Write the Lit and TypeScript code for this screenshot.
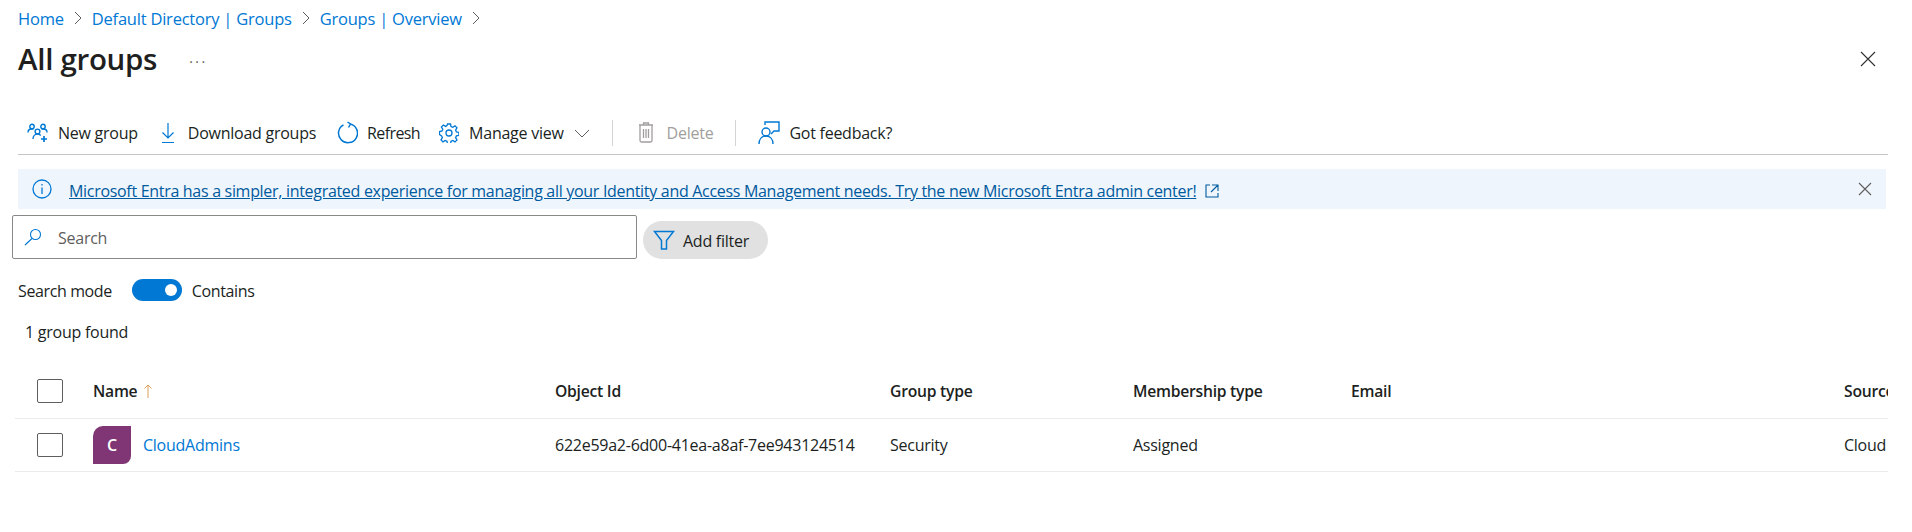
import { LitElement, html, css, svg } from "lit";
import { customElement } from "lit/decorators.js";

const chevron = svg`<path d="M5 2l6 6-6 6" fill="none" stroke="#605e5c" stroke-width="1"/>`;

@customElement("app-root")
export class AppRoot extends LitElement {
  static styles = css`
    :host {
      display: block;
      height: 532px;
      overflow: hidden;
      background: #fff;
      color: #201f1e;
      font-family: "Open Sans", "Noto Sans", sans-serif;
      font-size: 16px;
      letter-spacing: -0.25px;
    }
    svg {
      display: block;
      flex: none;
    }
    a {
      color: #0078d4;
      text-decoration: none;
    }
    .crumbs {
      display: flex;
      align-items: center;
      gap: 6px;
      height: 36px;
      padding-left: 18px;
      font-size: 16.5px;
      letter-spacing: -0.22px;
    }
    .title-row {
      display: flex;
      align-items: center;
      height: 46px;
      padding: 0 36px 0 18px;
    }
    h1 {
      margin: 0;
      font-size: 29.5px;
      line-height: 44px;
      font-weight: 600;
      letter-spacing: -0.3px;
    }
    .more {
      margin: 0 0 4px 32px;
      color: #605e5c;
      font-size: 14px;
      letter-spacing: 2.5px;
      flex: 1;
    }
    .toolbar {
      display: flex;
      align-items: center;
      height: 73px;
      margin: 0 24px 0 18px;
      padding: 29px 0 0 9px;
      border-bottom: 1px solid #c8c6c4;
      box-sizing: border-box;
      gap: 21px;
    }
    .tool {
      display: flex;
      align-items: center;
      gap: 9px;
      white-space: nowrap;
    }
    .tool.download {
      gap: 11px;
    }
    .tool.refresh {
      letter-spacing: -0.6px;
      margin-right: -2px;
    }
    .tool.manage {
      gap: 10px;
    }
    .tool.disabled {
      color: #a19f9d;
      gap: 13px;
      margin-left: 3px;
    }
    .sep {
      width: 1px;
      height: 26px;
      background: #d6d4d2;
      margin: 0 1px;
    }
    .banner {
      display: flex;
      align-items: center;
      height: 40px;
      margin: 14px 26px 0 18px;
      padding: 0 14px 0 14px;
      background: #eef5fd;
      gap: 17px;
    }
    .banner a {
      color: #005a9e;
      text-decoration: underline;
      letter-spacing: -0.305px;
    }
    .banner .msg {
      display: flex;
      align-items: center;
      gap: 9px;
      flex: 1;
      padding-top: 4px;
    }
    .filters {
      display: flex;
      align-items: flex-end;
      gap: 6px;
      margin: 6px 0 0 12px;
    }
    .search {
      display: flex;
      align-items: center;
      gap: 16px;
      width: 625px;
      height: 44px;
      padding-left: 11px;
      box-sizing: border-box;
      border: 1px solid #8a8886;
      border-radius: 2px;
      color: #605e5c;
    }
    .search span,
    .add span {
      padding-top: 2px;
    }
    .add {
      display: flex;
      align-items: center;
      gap: 8px;
      width: 125px;
      height: 38px;
      box-sizing: border-box;
      padding-left: 10px;
      background: #e1e1e1;
      border-radius: 19px;
    }
    .mode {
      display: flex;
      align-items: center;
      height: 22px;
      margin: 20px 0 0 18px;
      letter-spacing: -0.38px;
    }
    .mode span.label {
      padding-top: 2px;
    }
    .toggle {
      display: flex;
      justify-content: flex-end;
      align-items: center;
      width: 50px;
      height: 22px;
      margin: 0 10px 0 20px;
      padding-right: 5px;
      box-sizing: border-box;
      background: #0078d4;
      border-radius: 11px;
    }
    .knob {
      width: 12px;
      height: 12px;
      border-radius: 50%;
      background: #fff;
    }
    .count {
      margin: 21px 0 0 25px;
      line-height: 20px;
    }
    .table {
      margin: 17px 24px 0 15px;
      overflow: hidden;
    }
    .row {
      display: grid;
      grid-template-columns: 78px 462px 335px 243px 218px 493px 200px;
      align-items: center;
      white-space: nowrap;
      box-sizing: border-box;
      border-bottom: 1px solid #edebe9;
    }
    .row.head {
      height: 60px;
      font-weight: 600;
      font-size: 15.7px;
    }
    .row.head > span {
      padding-top: 4px;
    }
    .row.head > .box {
      margin-top: 4px;
      padding: 0;
    }
    .row.item {
      height: 53px;
    }
    .box {
      width: 26px;
      height: 24px;
      margin-left: 22px;
      box-sizing: border-box;
      border: 1px solid #605e5c;
      border-radius: 2px;
    }
    .name {
      display: flex;
      align-items: center;
      gap: 12px;
    }
    .avatar {
      display: flex;
      align-items: center;
      justify-content: center;
      width: 38px;
      height: 38px;
      background: #803674;
      color: #fff;
      font-size: 16px;
      font-weight: 600;
      border-radius: 10px 0 8px 0;
    }
  `;

  render() {
    return html`
      <nav class="crumbs">
        <a>Home</a>
        <svg width="16" height="16" viewBox="0 0 16 16">${chevron}</svg>
        <a>Default Directory | Groups</a>
        <svg width="16" height="16" viewBox="0 0 16 16">${chevron}</svg>
        <a>Groups | Overview</a>
        <svg width="16" height="16" viewBox="0 0 16 16">${chevron}</svg>
      </nav>
      <div class="title-row">
        <h1>All groups</h1>
        <span class="more">...</span>
        <svg width="16" height="16" viewBox="0 0 16 16"><path d="M1 1l14 14M15 1L1 15" stroke="#323130" stroke-width="1.1"/></svg>
      </div>
      <div class="toolbar">
        <span class="tool">
          <svg width="22" height="20" viewBox="0 0 22 20" fill="none" stroke="#0078d4" stroke-width="1.4">
            <circle cx="5" cy="3.500" r="2.200"/><circle cx="16" cy="3.500" r="2.200"/><circle cx="10.500" cy="8.500" r="2.400"/>
            <path d="M1 9.500c0-2 1.500-3.500 3.500-3.500h2M20 9.500c0-2-1.500-3.500-3.500-3.500h-2M6 16c0-3 2-5 4.500-5 1.500 0 2.500.5 3.200 1.500"/><path d="M17 13v6M14 16h6" stroke-width="1.700"/>
          </svg>New group
        </span>
        <span class="tool download">
          <svg width="18" height="22" viewBox="0 0 18 22" fill="none" stroke="#0078d4" stroke-width="1.2">
            <path d="M9 1v15M3.500 10.500L9 16l5.500-5.500M3 20.500h12"/>
          </svg>Download groups
        </span>
        <span class="tool refresh">
          <svg width="21" height="23" viewBox="0 0 21 23" fill="none" stroke="#0078d4" stroke-width="1.500">
            <path d="M6.500 3.800a9.500 9.500 0 1 0 7-.8M10.500 1L13.500 3l-2 3.500"/>
          </svg>Refresh
        </span>
        <span class="tool manage">
          <svg width="20" height="20" viewBox="0 0 20 20" fill="none" stroke="#0078d4" stroke-width="1.300">
            <circle cx="10" cy="10" r="3"/>
            <path d="M8.500 1h3l.5 2.500 1.800.8 2.200-1.400 2 2-1.400 2.200.8 1.800 2.500.5v3l-2.500.5-.8 1.800 1.400 2.200-2 2-2.200-1.400-1.800.8-.5 2.500h-3l-.5-2.500-1.800-.8-2.200 1.400-2-2 1.400-2.200-.8-1.800L.5 11.500v-3l2.500-.5.8-1.800L2.400 4l2-2 2.200 1.400 1.400-.8z"/>
          </svg>Manage view
          <svg width="16" height="16" viewBox="0 0 16 16"><path d="M1 5l7 7 7-7" fill="none" stroke="#605e5c"/></svg>
        </span>
        <span class="sep"></span>
        <span class="tool disabled">
          <svg width="16" height="21" viewBox="0 0 16 21" fill="none" stroke="#a19f9d" stroke-width="1.300">
            <path d="M1 3h14M5.500 3V1h5v2M2 3v15.500A1.500 1.500 0 0 0 3.500 20h9a1.500 1.500 0 0 0 1.500-1.500V3M5.500 7v9M8 7v9M10.500 7v9"/>
          </svg>Delete
        </span>
        <span class="sep"></span>
        <span class="tool">
          <svg width="22" height="24" viewBox="0 0 22 24" fill="none" stroke="#0078d4" stroke-width="1.400">
            <circle cx="8" cy="11" r="4"/><path d="M1 23c0-5 3-8 7-8s7 3 7 8M7 4V1h14v9h-5l-3 3"/>
          </svg>Got feedback?
        </span>
      </div>
      <div class="banner">
        <svg width="20" height="20" viewBox="0 0 20 20" fill="none" stroke="#0078d4" stroke-width="1.300">
          <circle cx="10" cy="10" r="9"/><path d="M10 8.500V15M10 5v1.500"/>
        </svg>
        <span class="msg">
          <a>Microsoft Entra has a simpler, integrated experience for managing all your Identity and Access Management needs. Try the new Microsoft Entra admin center!</a>
          <svg width="14" height="14" viewBox="0 0 14 14" fill="none" stroke="#005a9e" stroke-width="1.100">
            <path d="M5 1H1v12h12V9M7 1h6v6M13 1L6 8"/>
          </svg>
        </span>
        <svg width="14" height="14" viewBox="0 0 14 14"><path d="M1 1l12 12M13 1L1 13" stroke="#605e5c" stroke-width="1.100"/></svg>
      </div>
      <div class="filters">
        <label class="search">
          <svg width="18" height="18" viewBox="0 0 18 18" fill="none" stroke="#0078d4" stroke-width="1.100">
            <circle cx="11.500" cy="6.500" r="5"/><path d="M8 10.500L1 17"/>
          </svg><span>Search</span>
        </label>
        <span class="add">
          <svg width="22" height="20" viewBox="0 0 22 20" fill="none" stroke="#0078d4" stroke-width="1.500">
            <path d="M1.500 1.500h19l-7 9v8.500h-5v-8.500z"/>
          </svg><span>Add filter</span>
        </span>
      </div>
      <div class="mode"><span class="label">Search mode</span><span class="toggle"><span class="knob"></span></span><span class="label">Contains</span></div>
      <div class="count">1 group found</div>
      <div class="table">
        <div class="row head">
          <span class="box"></span>
          <span class="name" style="gap:6px">Name
            <svg width="10" height="14" viewBox="0 0 10 14" fill="none" stroke="#d9a05b"><path d="M5 14V1M1.500 4.500L5 1l3.500 3.500"/></svg>
          </span>
          <span>Object Id</span>
          <span>Group type</span>
          <span>Membership type</span>
          <span>Email</span>
          <span>Source</span>
        </div>
        <div class="row item">
          <span class="box"></span>
          <span class="name"><span class="avatar">C</span><a>CloudAdmins</a></span>
          <span>622e59a2-6d00-41ea-a8af-7ee943124514</span>
          <span>Security</span>
          <span>Assigned</span>
          <span></span>
          <span>Cloud</span>
        </div>
      </div>
    `;
  }
}
